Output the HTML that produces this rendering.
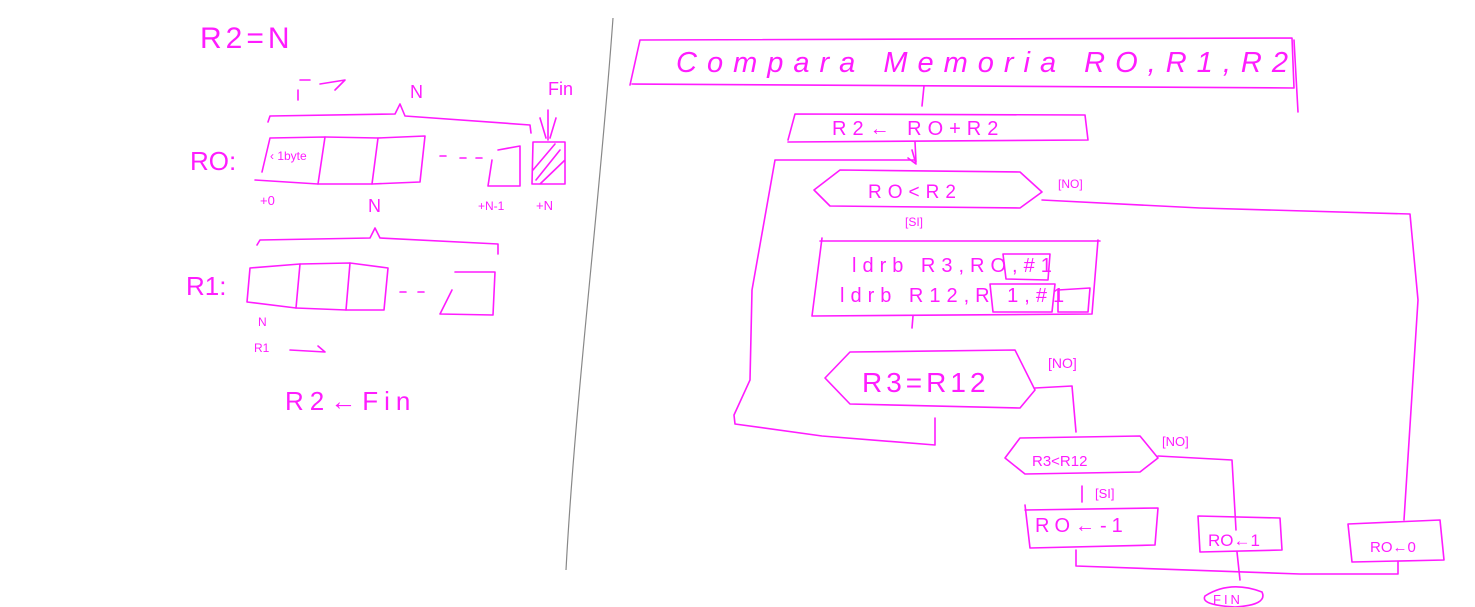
<!DOCTYPE html>
<html><head><style>
html,body{margin:0;padding:0;background:#fff;}
svg{display:block}
text{font-family:"Liberation Sans",sans-serif;fill:#ff1cff;}
</style></head><body>
<svg width="1475" height="607" viewBox="0 0 1475 607" xmlns="http://www.w3.org/2000/svg">
<path d="M613 18 C600 200 575 400 566 570" stroke="#888" stroke-width="1.2" fill="none"/>
<g stroke="#ff1cff" stroke-width="1.6" fill="none" stroke-linecap="round" stroke-linejoin="round">
<path d="M268 122 L270 116 L395 114 L400 104 L405 116 L530 125 L531 133"/>
<path d="M262 172 L270 138 L325 137 L318 184 L255 180"/>
<path d="M325 137 L378 138 L372 184 L318 184"/>
<path d="M378 138 L425 136 L420 182 L372 184"/>
<path d="M498 150 L520 146 L520 186 L488 186 L492 160"/>
<path d="M533 142 L565 142 L565 184 L532 184 Z M536 180 L560 150 M540 184 L565 160 M533 170 L555 144"/>
<path d="M548 110 L548 140 M540 118 L546 138 M556 118 L550 138"/>
<path d="M440 156 L446 156 M460 158 L466 158 M476 158 L482 158"/>
<path d="M257 245 L260 240 L370 238 L375 228 L380 238 L498 244 L498 254"/>
<path d="M250 268 L300 264 L296 308 L247 302 Z"/>
<path d="M300 264 L350 263 L346 310 L296 308"/>
<path d="M350 263 L388 268 L384 310 L346 310"/>
<path d="M455 272 L495 272 L493 315 L440 314 L452 290"/>
<path d="M400 292 L406 292 M418 292 L424 292"/>
<path d="M298 90 L298 100 M300 80 L310 80 M320 84 L345 80 L335 90"/>
<path d="M290 350 L325 352 L318 346"/>
<path d="M630 85 L640 40 L1292 38 L1294 88 L632 84 M1294 40 L1298 112"/>
<path d="M924 86 L922 106"/>
<path d="M788 140 L795 114 L1085 115 L1088 140 L788 142"/>
<path d="M915 142 L916 162 M908 158 L916 164 L912 150"/>
<path d="M775 160 L915 160 M775 160 L752 290 L750 380 L734 415 L735 424 L822 436 L935 445 L935 418"/>
<path d="M814 190 L840 170 L1020 172 L1042 192 L1020 208 L830 206 Z"/>
<path d="M1042 200 L1200 208 L1410 214 L1418 300 L1404 520"/>
<path d="M820 241 L1100 241 M822 238 L812 316 L1092 314 L1098 240"/>
<path d="M1003 254 L1050 254 L1048 280 L1006 279 Z M990 284 L1055 284 L1052 312 L993 312 Z M1058 290 L1090 288 L1088 312 L1058 312 Z"/>
<path d="M913 316 L912 328"/>
<path d="M825 378 L850 352 L1015 350 L1035 390 L1020 408 L850 404 Z"/>
<path d="M1035 388 L1072 386 L1076 432"/>
<path d="M1005 458 L1020 438 L1140 436 L1158 458 L1140 472 L1025 474 Z"/>
<path d="M1158 456 L1232 460 L1236 530"/>
<path d="M1082 486 L1082 502"/>
<path d="M1025 510 L1158 508 L1155 545 L1030 548 L1025 505"/>
<path d="M1198 516 L1280 518 L1282 550 L1200 552 Z"/>
<path d="M1348 524 L1440 520 L1444 560 L1352 562 Z"/>
<path d="M1076 550 L1076 566 L1300 574 L1398 574 L1398 562"/>
<path d="M1237 552 L1240 580"/>
<path d="M1205 596 Q1230 580 1262 592 Q1268 605 1235 607 Q1200 605 1205 596"/>
</g>
<g>
<text x="200" y="48" font-size="30" letter-spacing="4">R2=N</text>
<text x="190" y="170" font-size="26">RO:</text>
<text x="186" y="295" font-size="26">R1:</text>
<text x="285" y="410" font-size="26" letter-spacing="6">R2←Fin</text>
<text x="410" y="98" font-size="18">N</text>
<text x="368" y="212" font-size="18">N</text>
<text x="548" y="95" font-size="18">Fin</text>
<text x="260" y="205" font-size="13">+0</text>
<text x="478" y="210" font-size="12">+N-1</text>
<text x="536" y="210" font-size="13">+N</text>
<text x="270" y="160" font-size="12">‹ 1byte</text>
<text x="258" y="326" font-size="12">N</text>
<text x="254" y="352" font-size="12">R1</text>
<text x="676" y="72" font-size="29" letter-spacing="10" font-style="italic">Compara Memoria RO,R1,R2</text>
<text x="832" y="135" font-size="20" letter-spacing="6">R2← RO+R2</text>
<text x="868" y="198" font-size="19" letter-spacing="6">RO&lt;R2</text>
<text x="1058" y="188" font-size="12">[NO]</text>
<text x="905" y="226" font-size="12">[SI]</text>
<text x="852" y="272" font-size="20" letter-spacing="6">ldrb R3,RO,#1</text>
<text x="840" y="302" font-size="20" letter-spacing="6">ldrb R12,R 1,#1</text>
<text x="862" y="392" font-size="28" letter-spacing="4">R3=R12</text>
<text x="1048" y="368" font-size="14">[NO]</text>
<text x="1032" y="466" font-size="15">R3&lt;R12</text>
<text x="1162" y="446" font-size="13">[NO]</text>
<text x="1095" y="498" font-size="13">[SI]</text>
<text x="1035" y="532" font-size="20" letter-spacing="5">RO←-1</text>
<text x="1208" y="546" font-size="17">RO←1</text>
<text x="1370" y="552" font-size="15">RO←0</text>
<text x="1213" y="604" font-size="13" letter-spacing="3">FIN</text>
</g>
</svg>
</body></html>
